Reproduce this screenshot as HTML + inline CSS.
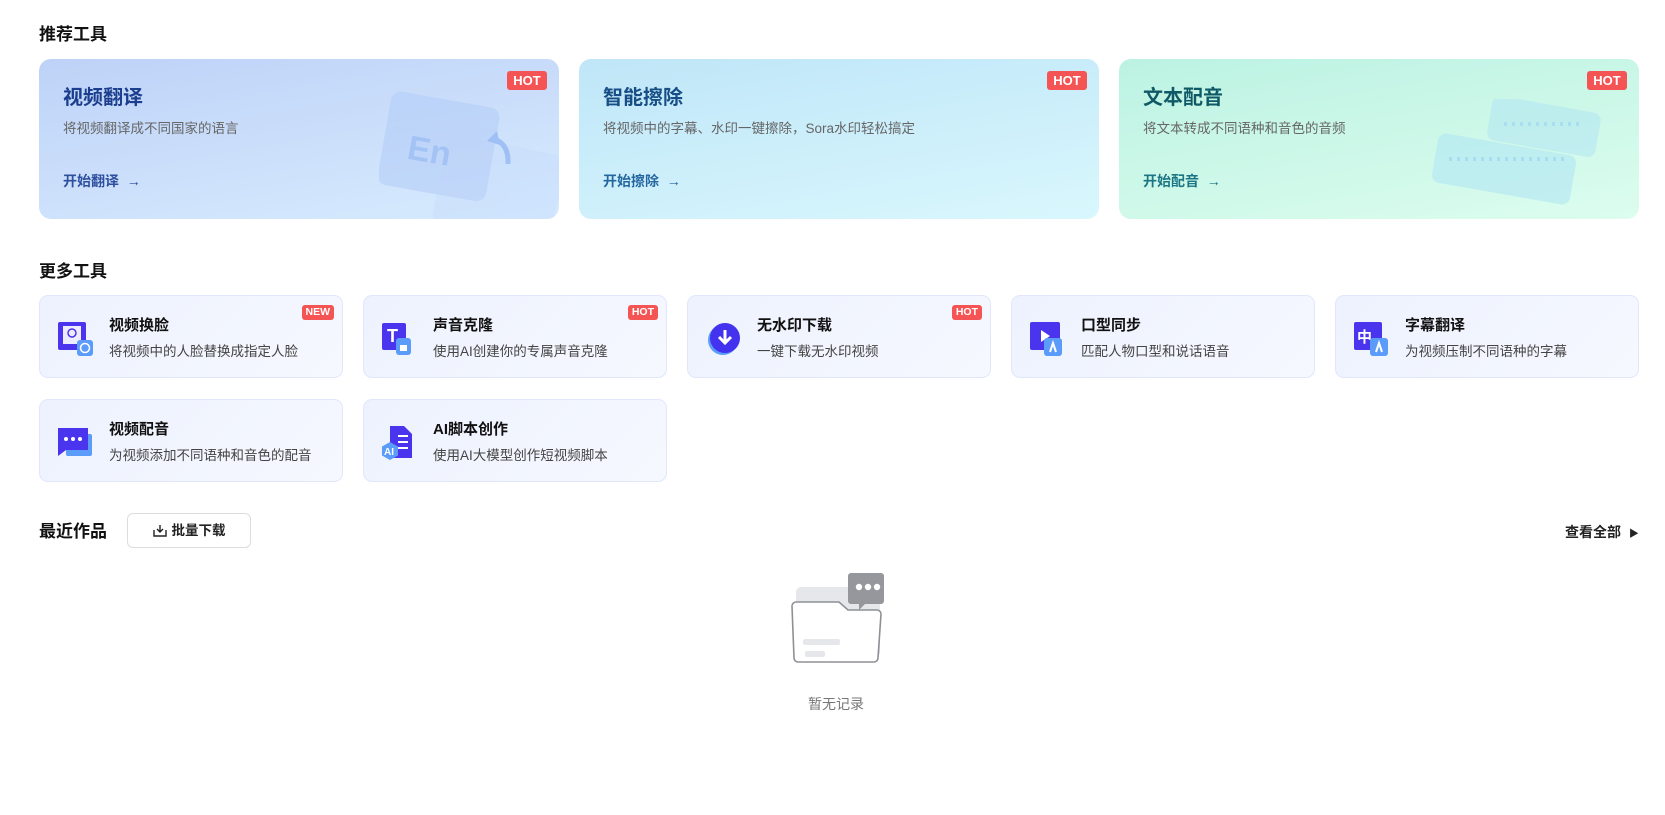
<!DOCTYPE html>
<html><head><meta charset="utf-8"><style>
*{box-sizing:border-box;margin:0;padding:0}
body{width:1665px;height:815px;background:#fff;font-family:"Liberation Sans","Noto Sans CJK SC",sans-serif;color:#1a1a1a;position:relative;overflow:hidden}
.h{position:absolute;font-size:17px;font-weight:bold;color:#111}
.big{position:absolute;top:59px;width:520px;height:160px;border-radius:12px;overflow:hidden}
.big .t{position:absolute;left:24px;top:22px;font-size:20px;font-weight:bold}
.big .d{position:absolute;left:24px;top:58px;font-size:13.5px;color:#666}
.big .l{position:absolute;left:24px;top:112px;font-size:14px;font-weight:bold}
.hot{position:absolute;background:#f55454;color:#fff;font-weight:bold;border-radius:3px;text-align:center;font-family:"Liberation Sans",sans-serif}
.big .hot{right:12px;top:12px;width:40px;height:19px;font-size:13px;line-height:19px}
.sm{position:absolute;width:304px;height:83px;border-radius:9px;border:1px solid #e0e7fb;background:linear-gradient(135deg,#edf2fe,#f6f8ff)}
.sm .ic{position:absolute;left:18px;top:24px;width:36px;height:36px}
.sm .t{position:absolute;left:69px;top:18px;font-size:15px;font-weight:bold;color:#111}
.sm .d{position:absolute;left:69px;top:44px;font-size:13.5px;color:#444}
.sm .hot{right:8px;top:9px;font-size:10.5px;height:15px;line-height:15px;padding:0 4px}
</style></head><body>
<div class="h" style="left:39px;top:20px">推荐工具</div>

<div class="big" style="left:39px;background:linear-gradient(170deg,#bed2f8,#d7ebfe)">
 <svg style="position:absolute;left:340px;top:30px;opacity:.7" width="180" height="130" viewBox="0 0 180 130">
  <rect x="60" y="55" width="120" height="90" rx="8" fill="#c6dcfb" opacity=".6" transform="rotate(12 120 100)"/>
  <rect x="5" y="10" width="110" height="95" rx="10" fill="#b3cdf8" opacity=".8" transform="rotate(10 60 55)"/>
  <text x="30" y="75" font-size="34" font-weight="bold" fill="#92b6f3" transform="rotate(10 60 55)" font-family="Liberation Sans">En</text>
  <path d="M115 50 q15 5 14 25" stroke="#8cb2f2" stroke-width="5" fill="none"/><path d="M108 52 l10 -10 l3 14z" fill="#8cb2f2"/>
 </svg>
 <div class="hot">HOT</div>
 <div class="t" style="color:#1b3e8e">视频翻译</div>
 <div class="d">将视频翻译成不同国家的语言</div>
 <div class="l" style="color:#2d4f9e">开始翻译 &nbsp;→</div>
</div>
<div class="big" style="left:579px;background:linear-gradient(170deg,#bfe6f8,#d9f7fd)">
 <div class="hot">HOT</div>
 <div class="t" style="color:#174e85">智能擦除</div>
 <div class="d">将视频中的字幕、水印一键擦除，Sora水印轻松搞定</div>
 <div class="l" style="color:#2466a0">开始擦除 &nbsp;→</div>
</div>
<div class="big" style="left:1119px;background:linear-gradient(170deg,#bcf2e2,#dcfdef)">
 <svg style="position:absolute;left:310px;top:40px;opacity:.75" width="210" height="120" viewBox="0 0 210 120">
  <rect x="60" y="5" width="110" height="45" rx="8" fill="#b5e7f2" opacity=".8" transform="rotate(10 115 27)"/>
  <rect x="5" y="45" width="140" height="50" rx="8" fill="#b2e6f3" opacity=".8" transform="rotate(10 75 70)"/>
  <path d="M75 25h80M20 60h115" stroke="#9dd4f2" stroke-width="4" stroke-dasharray="3 5"/>
 </svg>
 <div class="hot">HOT</div>
 <div class="t" style="color:#0f5966">文本配音</div>
 <div class="d">将文本转成不同语种和音色的音频</div>
 <div class="l" style="color:#1b7584">开始配音 &nbsp;→</div>
</div>

<div class="h" style="left:39px;top:257px">更多工具</div>

<div class="sm" style="left:39px;top:295px"><svg class="ic" viewBox="0 0 36 36"><rect x="0" y="2" width="28" height="28" rx="2" fill="#4b34ee"/><rect x="5" y="6" width="18" height="18" fill="#fff" opacity=".9"/><circle cx="14" cy="13" r="4" fill="none" stroke="#4b34ee" stroke-width="1.5"/><rect x="19" y="20" width="16" height="16" rx="3" fill="#5b9cfa"/><circle cx="27" cy="28" r="4.5" fill="none" stroke="#fff" stroke-width="1.5"/></svg><div class="hot">NEW</div><div class="t">视频换脸</div><div class="d">将视频中的人脸替换成指定人脸</div></div>
<div class="sm" style="left:363px;top:295px"><svg class="ic" viewBox="0 0 36 36"><rect x="0" y="3" width="24" height="27" rx="2" fill="#4b34ee"/><text x="5" y="22" font-size="18" font-weight="bold" fill="#fff" font-family="Liberation Sans">T</text><rect x="14" y="18" width="15" height="17" rx="3" fill="#5b9cfa"/><rect x="18" y="25" width="7" height="6" fill="#fff"/></svg><div class="hot">HOT</div><div class="t">声音克隆</div><div class="d">使用AI创建你的专属声音克隆</div></div>
<div class="sm" style="left:687px;top:295px"><svg class="ic" viewBox="0 0 36 36"><circle cx="17" cy="20" r="15" fill="#5b9cfa"/><circle cx="19" cy="18" r="15" fill="#4433ee"/><path d="M19 10v12M13 17l6 6 6-6" stroke="#fff" stroke-width="3" fill="none"/></svg><div class="hot">HOT</div><div class="t">无水印下载</div><div class="d">一键下载无水印视频</div></div>
<div class="sm" style="left:1011px;top:295px"><svg class="ic" viewBox="0 0 36 36"><rect x="0" y="2" width="30" height="28" rx="2" fill="#4b34ee"/><path d="M11 10v12l9-6z" fill="#fff"/><rect x="14" y="18" width="18" height="18" rx="3" fill="#5b9cfa"/><path d="M20 32l3-9 3 9" stroke="#fff" stroke-width="2" fill="none"/></svg><div class="t">口型同步</div><div class="d">匹配人物口型和说话语音</div></div>
<div class="sm" style="left:1335px;top:295px"><svg class="ic" viewBox="0 0 36 36"><rect x="0" y="2" width="28" height="28" rx="2" fill="#4b34ee"/><text x="3" y="22" font-size="15" font-weight="bold" fill="#fff" font-family="Noto Sans CJK SC">中</text><rect x="16" y="18" width="18" height="18" rx="3" fill="#5b9cfa"/><path d="M22 32l3-9 3 9" stroke="#fff" stroke-width="2" fill="none"/></svg><div class="t">字幕翻译</div><div class="d">为视频压制不同语种的字幕</div></div>
<div class="sm" style="left:39px;top:399px"><svg class="ic" viewBox="0 0 36 36"><rect x="8" y="10" width="26" height="22" rx="2" fill="#5b9cfa"/><path d="M0 4h30v22H8l-8 6z" fill="#4b34ee"/><circle cx="8" cy="15" r="2" fill="#fff"/><circle cx="15" cy="15" r="2" fill="#fff"/><circle cx="22" cy="15" r="2" fill="#fff"/></svg><div class="t">视频配音</div><div class="d">为视频添加不同语种和音色的配音</div></div>
<div class="sm" style="left:363px;top:399px"><svg class="ic" viewBox="0 0 36 36"><path d="M8 2h14l8 8v24H8z" fill="#4b34ee"/><path d="M16 12h10M16 18h10M16 24h10" stroke="#fff" stroke-width="2"/><path d="M8 18l8 4.5v9L8 36 0 31.5v-9z" fill="#5b9cfa"/><text x="2" y="31" font-size="10" font-weight="bold" fill="#fff" font-family="Liberation Sans">AI</text></svg><div class="t">AI脚本创作</div><div class="d">使用AI大模型创作短视频脚本</div></div>

<div class="h" style="left:39px;top:517px">最近作品</div>
<div style="position:absolute;left:127px;top:513px;width:124px;height:35px;border:1px solid #ddd;border-radius:6px;font-size:13.5px;font-weight:bold;line-height:33px;text-align:center;color:#222"><svg width="14" height="13" viewBox="0 0 14 13" style="vertical-align:-2px;margin-right:5px"><path d="M1 6v6h12V6M7 1v7M4 5l3 3 3-3" stroke="#222" stroke-width="1.4" fill="none"/></svg>批量下载</div>
<div style="position:absolute;left:1565px;top:522px;font-size:14px;font-weight:bold;color:#222">查看全部 <span style="font-size:10px;margin-left:4px">▶</span></div>

<svg style="position:absolute;left:788px;top:573px" width="100" height="96" viewBox="0 0 100 96">
 <rect x="8" y="14" width="84" height="70" rx="5" fill="#e6e7eb"/>
 <path d="M4 33a4 4 0 0 1 4-4h43l9 8h29a4 4 0 0 1 4 4l-3 44a4 4 0 0 1-4 4H10a4 4 0 0 1-4-4z" fill="#fff" stroke="#8e9096" stroke-width="1.6"/>
 <rect x="15" y="66" width="37" height="6" rx="2" fill="#e6e7eb"/><rect x="17" y="78" width="20" height="6" rx="2" fill="#e6e7eb"/>
 <path d="M63 0h30a3 3 0 0 1 3 3v25a3 3 0 0 1-3 3H77l-6 6v-6h-8a3 3 0 0 1-3-3V3a3 3 0 0 1 3-3z" fill="#95979c"/>
 <circle cx="71" cy="14" r="3.2" fill="#fff"/><circle cx="80" cy="14" r="3.2" fill="#fff"/><circle cx="89" cy="14" r="3.2" fill="#fff"/>
</svg>
<div style="position:absolute;left:808px;top:694px;font-size:14px;color:#777">暂无记录</div>
</body></html>
